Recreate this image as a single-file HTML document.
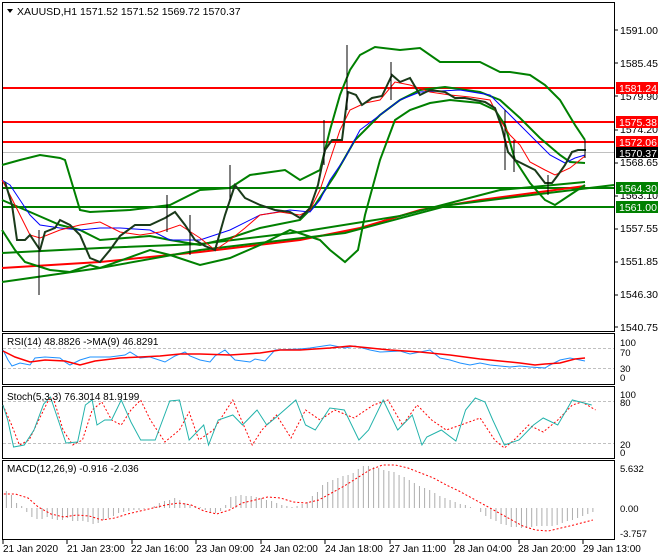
<!DOCTYPE html>
<html><head><meta charset="utf-8"><style>
html,body{margin:0;padding:0;background:#fff;}
svg{display:block;font-family:"Liberation Sans",sans-serif;font-size:10px;}
</style></head><body>
<svg width="660" height="560" viewBox="0 0 660 560" xmlns="http://www.w3.org/2000/svg">
<rect width="660" height="560" fill="#fff"/>
<rect x="2.5" y="2.5" width="612" height="329" fill="none" stroke="#000"/>
<rect x="2.5" y="333.5" width="612" height="51" fill="none" stroke="#000"/>
<rect x="2.5" y="386.5" width="612" height="72" fill="none" stroke="#000"/>
<rect x="2.5" y="460.5" width="612" height="79" fill="none" stroke="#000"/>

<line x1="3" y1="152.5" x2="614" y2="152.5" stroke="#c0c0c0"/>
<g stroke="#ff0000" stroke-width="2">
<line x1="3" y1="88" x2="614" y2="88"/><line x1="3" y1="122" x2="614" y2="122"/><line x1="3" y1="142" x2="614" y2="142"/>
</g>
<g stroke="#008000" stroke-width="2">
<line x1="3" y1="188" x2="614" y2="188"/><line x1="3" y1="207" x2="614" y2="207"/>
</g>
<polyline fill="none" stroke="#ff0000" stroke-width="2" points="2,268 100,262 200,252 300,240 360,228 420,210 480,200 585,186"/>
<polyline fill="none" stroke="#008000" stroke-width="2" points="2,282 100,268 200,250 345,233 450,205 614,185"/>
<polyline fill="none" stroke="#008000" stroke-width="2" points="2,253 100,248 200,244 300,232 400,216 500,190 585,182"/>
<g fill="none" stroke="#008000" stroke-width="2">
<polyline points="2,165 20,160 40,155 60,158 65,160 80,210 90,212 130,210 170,205 200,190 230,188 250,175 285,170 300,180 320,170 330,130 340,95 350,70 360,55 375,47 400,50 420,48 440,62 480,62 500,72 510,72 530,75 545,85 560,100 575,125 585,140"/>
<polyline points="2,230 15,250 25,262 50,270 70,272 90,265 100,268 150,250 170,255 200,265 230,258 260,245 290,230 320,240 330,250 345,262 358,250 365,215 380,160 395,120 410,110 430,103 450,100 480,103 495,110 505,125 515,160 530,183 545,200 555,205 570,195 585,185"/>
<polyline points="2,200 30,212 60,225 80,230 100,240 150,236 170,240 200,245 230,238 260,228 300,220 315,205 335,175 355,140 380,115 400,100 420,90 445,87 480,92 500,100 520,118 540,138 560,155 570,162 585,163"/>
</g>
<polyline fill="none" stroke="#0000ff" stroke-width="1" points="2,180 10,185 20,200 30,215 40,225 60,228 80,230 100,228 120,228 150,230 170,240 200,240 230,230 260,215 290,210 310,212 320,200 330,180 345,158 360,130 380,115 400,100 420,92 460,90 490,95 505,110 520,125 535,140 550,155 565,163 575,158 585,155"/>
<polyline fill="none" stroke="#ff0000" stroke-width="1" points="2,180 10,195 20,215 30,235 40,238 60,230 80,225 100,222 120,232 140,235 160,232 180,225 200,238 215,250 230,240 245,228 260,215 280,212 300,215 310,210 320,190 330,160 340,130 350,110 365,103 380,100 395,82 410,85 430,92 450,95 470,97 490,100 500,120 510,135 520,145 530,162 545,170 555,175 570,168 585,156"/>
<polyline fill="none" stroke="#1a3a1a" stroke-width="2" points="5,182 12,205 17,240 25,240 30,235 40,250 45,232 55,228 60,220 70,225 80,235 90,258 100,262 110,250 120,236 135,225 150,225 165,218 175,212 185,225 195,240 205,246 215,250 225,215 235,185 245,198 260,205 275,210 290,212 300,218 310,208 318,185 325,150 332,140 342,140 348,92 356,95 362,105 372,98 382,96 392,75 400,82 410,78 420,95 430,90 445,92 455,98 465,98 475,100 485,102 495,108 502,128 508,152 515,160 525,165 535,170 545,183 552,183 558,175 565,165 572,152 578,150 586,150"/>
<g stroke="#000" stroke-width="1">
<line x1="39" y1="230" x2="39" y2="295"/><line x1="347" y1="45" x2="347" y2="110"/><line x1="324" y1="120" x2="324" y2="165"/><line x1="391" y1="62" x2="391" y2="100"/><line x1="230" y1="165" x2="230" y2="200"/><line x1="505" y1="110" x2="505" y2="170"/><line x1="514" y1="140" x2="514" y2="172"/><line x1="548" y1="175" x2="548" y2="195"/><line x1="585" y1="140" x2="585" y2="158"/><line x1="190" y1="215" x2="190" y2="255"/><line x1="167" y1="195" x2="167" y2="232"/>
</g>
<path d="M7,9 L13,9 L10,13 Z" fill="#000"/>
<text x="17" y="15" font-size="10.5">XAUUSD,H1  1571.52 1571.52 1569.72 1570.37</text>

<g font-size="10.5">
<text x="620" y="34">1591.00</text><text x="620" y="67">1585.45</text><text x="620" y="100">1579.90</text><text x="620" y="133">1574.20</text><text x="620" y="166">1568.65</text><text x="620" y="199">1563.10</text><text x="620" y="232">1557.55</text><text x="620" y="265">1551.85</text><text x="620" y="298">1546.30</text><text x="620" y="331">1540.75</text>
</g>
<g stroke="#000"><line x1="614" y1="30" x2="618" y2="30"/><line x1="614" y1="63" x2="618" y2="63"/><line x1="614" y1="96" x2="618" y2="96"/><line x1="614" y1="130" x2="618" y2="130"/><line x1="614" y1="163" x2="618" y2="163"/><line x1="614" y1="196" x2="618" y2="196"/><line x1="614" y1="229" x2="618" y2="229"/><line x1="614" y1="262" x2="618" y2="262"/><line x1="614" y1="295" x2="618" y2="295"/><line x1="614" y1="327" x2="618" y2="327"/></g>
<g font-size="10.5">
<rect x="616" y="82" width="42" height="12" fill="#ff0000"/><text x="619" y="92" fill="#fff">1581.24</text>
<rect x="616" y="116" width="42" height="12" fill="#ff0000"/><text x="619" y="126" fill="#fff">1575.38</text>
<rect x="616" y="136" width="42" height="12" fill="#ff0000"/><text x="619" y="146" fill="#fff">1572.06</text>
<rect x="616" y="147" width="42" height="11" fill="#000"/><text x="619" y="157" fill="#fff">1570.37</text>
<rect x="616" y="182" width="42" height="12" fill="#008000"/><text x="619" y="192" fill="#fff">1564.30</text>
<rect x="616" y="201" width="42" height="12" fill="#008000"/><text x="619" y="211" fill="#fff">1561.00</text>
</g>

<!-- RSI -->
<g stroke="#c0c0c0" stroke-dasharray="3,2"><line x1="3" y1="348.5" x2="614" y2="348.5"/><line x1="3" y1="368.5" x2="614" y2="368.5"/></g>
<polyline fill="none" stroke="#1e90ff" stroke-width="1" points="3,350 8,360 12,366 20,363 30,365 35,358 45,357 60,358 65,362 70,365 80,360 90,357 110,357 125,355 130,352 140,358 150,357 165,362 175,356 185,352 190,356 200,360 210,362 215,356 225,350 235,360 250,362 255,359 265,361 275,350 300,349 310,348 330,345 345,348 355,346 370,350 380,352 400,351 410,354 430,350 440,358 450,360 460,363 470,365 480,363 490,365 500,366 510,367 520,366 530,367 545,368 550,365 560,360 570,358 580,360 585,361"/>
<polyline fill="none" stroke="#ff0000" stroke-width="1.5" points="3,351 15,357 30,362 45,360 65,361 80,365 95,361 120,358 140,357 160,356 180,354 200,354 230,355 260,353 280,350 300,350 330,348 350,346 370,348 390,350 420,352 450,355 480,359 500,361 520,363 535,365 545,364 560,363 575,359 585,358"/>
<text x="7" y="345" font-size="10">RSI(14) 48.8826  -&gt;MA(9) 46.8291</text>
<g font-size="9.5"><text x="620" y="346">100</text><text x="620" y="356">70</text><text x="620" y="372">30</text><text x="620" y="381">0</text></g>

<!-- Stoch -->
<g stroke="#c0c0c0" stroke-dasharray="3,2"><line x1="3" y1="401.5" x2="614" y2="401.5"/><line x1="3" y1="443.5" x2="614" y2="443.5"/></g>
<g transform="matrix(0.97,0,0,1,0,0)">
<polyline fill="none" stroke="#ff0000" stroke-width="1" stroke-dasharray="2,2" points="3,405 12,425 20,445 30,440 40,420 50,400 55,398 65,430 75,445 85,440 95,410 105,402 115,420 125,425 135,410 145,400 155,420 170,442 185,430 195,412 205,440 220,430 240,400 260,445 270,430 285,415 300,438 315,410 330,420 345,410 365,418 385,405 400,400 415,425 430,405 445,420 460,430 475,425 495,418 510,440 520,448 530,440 545,425 560,432 575,420 590,405 600,402 614,410"/>
<polyline fill="none" stroke="#20b2aa" stroke-width="1" points="3,405 8,420 14,447 25,445 35,430 45,404 52,397 60,420 68,443 80,442 88,405 95,400 100,425 108,420 115,420 125,400 135,422 145,440 160,440 175,401 185,400 195,440 210,425 215,445 225,420 240,415 250,425 265,410 275,425 285,417 305,400 315,425 325,430 340,408 355,410 370,440 380,430 395,400 410,430 425,415 435,445 440,437 455,430 470,441 480,410 490,398 500,402 508,420 520,445 535,440 550,425 560,418 575,425 590,400 610,405"/>
</g>
<text x="7" y="400" font-size="10">Stoch(5,3,3) 76.3014 81.9199</text>
<g font-size="9.5"><text x="620" y="398">100</text><text x="620" y="406">80</text><text x="620" y="448">20</text><text x="620" y="456">0</text></g>

<!-- MACD -->
<g transform="matrix(1.275,0,0,1,0,0)">
<g stroke="#b0b0b0" stroke-width="0.8">
<path d="M5,508V491 M9,508V495 M13,508V503 M17,508V506 M21,508V512 M25,508V517 M29,508V519 M33,508V519 M37,508V517 M41,508V519 M45,508V520 M49,508V520 M53,508V518 M57,508V521 M61,508V521 M65,508V521 M69,508V522 M73,508V524 M77,508V523 M81,508V520 M85,508V518 M89,508V516 M93,508V513 M97,508V512 M101,508V511 M105,508V510 M109,508V510 M113,508V509 M117,508V508 M121,508V506 M125,508V503 M129,508V501 M133,508V500 M137,508V498 M141,508V500 M145,508V503 M149,508V505 M153,508V506 M157,508V507 M161,508V510 M165,508V512 M169,508V513 M173,508V511 M177,508V505 M181,508V497 M185,508V496 M189,508V495 M193,508V496 M197,508V496 M201,508V497 M205,508V498 M209,508V500 M213,508V501 M217,508V503 M221,508V505 M225,508V506 M229,508V507 M233,508V506 M237,508V504 M241,508V502 M245,508V496 M249,508V492 M253,508V485 M257,508V482 M261,508V480 M265,508V478 M269,508V476 M273,508V475 M277,508V473 M281,508V469 M285,508V466 M289,508V466 M293,508V467 M297,508V468 M301,508V470 M305,508V471 M309,508V472 M313,508V475 M317,508V477 M321,508V480 M325,508V483 M329,508V486 M333,508V488 M337,508V490 M341,508V493 M345,508V496 M349,508V498 M353,508V500 M357,508V502 M361,508V504 M365,508V505 M369,508V507 M373,508V508 M377,508V512 M381,508V516 M385,508V519 M389,508V521 M393,508V524 M397,508V525 M401,508V527 M405,508V527 M409,508V528 M413,508V528 M417,508V527 M421,508V526 M425,508V526 M429,508V526 M433,508V526 M437,508V525 M441,508V523 M445,508V521 M449,508V520 M453,508V518 M457,508V516 M461,508V514 M465,508V512"/>
</g>
<polyline fill="none" stroke="#ff0000" stroke-width="1" stroke-dasharray="2,2" vector-effect="non-scaling-stroke" points="3,494 12,494 22,498 30,507 40,514 50,517 60,515 70,516 80,520 90,518 100,514 110,511 120,508 130,505 140,503 150,505 160,511 170,514 180,510 190,503 200,500 210,497 220,498 230,502 240,503 250,500 260,493 270,486 280,478 290,470 300,465 310,465 320,468 330,473 340,478 350,485 360,491 370,498 380,505 390,512 400,519 410,526 420,530 430,531 440,528 450,525 465,520"/>
</g>
<text x="7" y="472" font-size="10">MACD(12,26,9) -0.916 -2.036</text>
<g font-size="9.5"><text x="620" y="472">5.632</text><text x="620" y="512">0.00</text><text x="620" y="537">-3.757</text></g>

<!-- time axis -->
<g stroke="#000"><line x1="3" y1="540" x2="3" y2="544"/><line x1="67" y1="540" x2="67" y2="544"/><line x1="132" y1="540" x2="132" y2="544"/><line x1="196" y1="540" x2="196" y2="544"/><line x1="261" y1="540" x2="261" y2="544"/><line x1="325" y1="540" x2="325" y2="544"/><line x1="390" y1="540" x2="390" y2="544"/><line x1="454" y1="540" x2="454" y2="544"/><line x1="519" y1="540" x2="519" y2="544"/><line x1="583" y1="540" x2="583" y2="544"/></g>
<g font-size="10">
<text x="3" y="552">21 Jan 2020</text><text x="67" y="552">21 Jan 23:00</text><text x="131" y="552">22 Jan 16:00</text><text x="196" y="552">23 Jan 09:00</text><text x="260" y="552">24 Jan 02:00</text><text x="325" y="552">24 Jan 18:00</text><text x="389" y="552">27 Jan 11:00</text><text x="454" y="552">28 Jan 04:00</text><text x="518" y="552">28 Jan 20:00</text><text x="583" y="552">29 Jan 13:00</text>
</g>
</svg>
</body></html>
